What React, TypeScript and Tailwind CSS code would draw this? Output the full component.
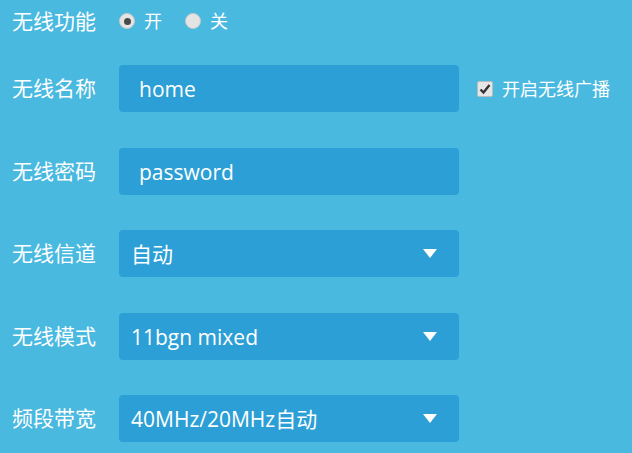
import React from "react";

const font = { fontFamily: '"Open Sans", "Noto Sans CJK SC", sans-serif' };

function Caret() {
  return (
    <svg width="14" height="9" viewBox="0 0 14 9" className="shrink-0">
      <polygon points="0,0 14,0 7,9" fill="#ffffff" />
    </svg>
  );
}

function Label({ children }: { children: React.ReactNode }) {
  return <div className="w-[107px] shrink-0 text-[21px] text-white leading-none">{children}</div>;
}

function Radio({ checked }: { checked?: boolean }) {
  return (
    <div className="w-[16px] h-[16px] rounded-full bg-[#e4e4e4] border border-[#c9c9c9] flex items-center justify-center">
      {checked && <div className="w-[7px] h-[7px] rounded-full bg-[#4a4a4a]" />}
    </div>
  );
}

function Select({ value }: { value: string }) {
  return (
    <div className="w-[340px] h-[47px] rounded-[4px] bg-[#2ca0d6] flex items-center justify-between pl-[12px] pr-[22px]">
      <span className="text-[21px] text-white leading-none pt-[2px]">{value}</span>
      <Caret />
    </div>
  );
}

export default function App() {
  return (
    <div className="w-[632px] h-[453px] bg-[#49b9e0] overflow-hidden pl-[12px]" style={font}>
      <div className="h-[42px] flex items-center">
        <Label>无线功能</Label>
        <div className="flex items-center">
          <Radio checked />
          <span className="ml-[9px] text-[18px] text-white leading-none">开</span>
          <div className="ml-[23px]"><Radio /></div>
          <span className="ml-[9px] text-[18px] text-white leading-none">关</span>
        </div>
      </div>
      <div className="mt-[23px] flex flex-col gap-[35.5px]">
        <div className="h-[47px] flex items-center">
          <Label>无线名称</Label>
          <div className="w-[340px] h-[47px] rounded-[4px] bg-[#2ca0d6] flex items-center pl-[20px]">
            <span className="text-[21px] text-white leading-none pt-[2px]">home</span>
          </div>
          <div className="ml-[18px] w-[16px] h-[16px] bg-[#e6e6e6] border border-[#bdbdbd] rounded-[2px] flex items-center justify-center">
            <svg width="12" height="12" viewBox="0 0 12 12">
              <path d="M1.5 6.5 L4.5 9.5 L10.5 2" stroke="#333" strokeWidth="2.4" fill="none" />
            </svg>
          </div>
          <span className="ml-[9px] text-[18px] text-white leading-none">开启无线广播</span>
        </div>
        <div className="h-[47px] flex items-center">
          <Label>无线密码</Label>
          <div className="w-[340px] h-[47px] rounded-[4px] bg-[#2ca0d6] flex items-center pl-[20px]">
            <span className="text-[21px] text-white leading-none pt-[2px]">password</span>
          </div>
        </div>
        <div className="h-[47px] flex items-center">
          <Label>无线信道</Label>
          <Select value="自动" />
        </div>
        <div className="h-[47px] flex items-center">
          <Label>无线模式</Label>
          <Select value="11bgn mixed" />
        </div>
        <div className="h-[47px] flex items-center">
          <Label>频段带宽</Label>
          <Select value="40MHz/20MHz自动" />
        </div>
      </div>
    </div>
  );
}
